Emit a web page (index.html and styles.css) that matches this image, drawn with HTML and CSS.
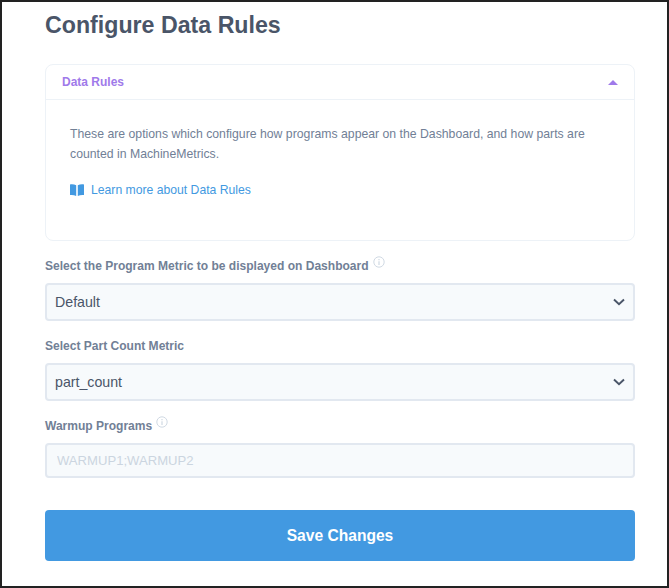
FILE: index.html
```html
<!DOCTYPE html>
<html lang="en">
<head>
    <meta charset="UTF-8">
    <meta name="viewport" content="width=device-width, initial-scale=1.0">
    <title>Configure Data Rules</title>
    <link rel="stylesheet" href="styles.css">
</head>
<body>
    <div class="container">
        <h1 class="page-title">Configure Data Rules</h1>

        <div class="card">
            <div class="card-header">
                <span class="card-title">Data Rules</span>
                <span class="caret-up"></span>
            </div>
            <div class="card-body">
                <p class="card-text">These are options which configure how programs appear on the Dashboard, and how parts are counted in MachineMetrics.</p>
                <a class="learn-link" href="#">
                    <svg class="book-icon" viewBox="0 0 14 12" width="14" height="12">
                        <path d="M0 0.4 C2.2 0 4.4 0.3 6.2 1.2 V12 C4.4 11 2.2 10.7 0 11 Z" fill="#4299e1"/>
                        <path d="M14 0.4 C11.8 0 9.6 0.3 7.8 1.2 V12 C9.6 11 11.8 10.7 14 11 Z" fill="#4299e1"/>
                    </svg>
                    Learn more about Data Rules
                </a>
            </div>
        </div>

        <div class="field">
            <label class="field-label">Select the Program Metric to be displayed on Dashboard
                <svg class="info-icon" viewBox="0 0 12 12" width="12" height="12">
                    <circle cx="6" cy="6" r="5.2" fill="none" stroke="#cbd5e0" stroke-width="0.9"/>
                    <path d="M6 5.2 V9 M6 3 V4.2" stroke="#cbd5e0" stroke-width="1.1"/>
                </svg>
            </label>
            <div class="select-wrap">
                <select class="control">
                    <option>Default</option>
                </select>
                <svg class="chevron" viewBox="0 0 12 8" width="12" height="8">
                    <path d="M1 1.5 L6 6.3 L11 1.5" fill="none" stroke="#4a5568" stroke-width="1.9"/>
                </svg>
            </div>
        </div>

        <div class="field">
            <label class="field-label">Select Part Count Metric</label>
            <div class="select-wrap">
                <select class="control">
                    <option>part_count</option>
                </select>
                <svg class="chevron" viewBox="0 0 12 8" width="12" height="8">
                    <path d="M1 1.5 L6 6.3 L11 1.5" fill="none" stroke="#4a5568" stroke-width="1.9"/>
                </svg>
            </div>
        </div>

        <div class="field">
            <label class="field-label">Warmup Programs
                <svg class="info-icon" viewBox="0 0 12 12" width="12" height="12">
                    <circle cx="6" cy="6" r="5.2" fill="none" stroke="#cbd5e0" stroke-width="0.9"/>
                    <path d="M6 5.2 V9 M6 3 V4.2" stroke="#cbd5e0" stroke-width="1.1"/>
                </svg>
            </label>
            <input class="control-input" type="text" placeholder="WARMUP1;WARMUP2">
        </div>

        <button class="save-btn">Save Changes</button>
    </div>
</body>
</html>
```

FILE: styles.css
```css
* {
    box-sizing: border-box;
}
body {
    margin: 0;
    background: #fff;
    font-family: "Liberation Sans", Arial, sans-serif;
}
.container {
    width: 669px;
    height: 588px;
    border: 2px solid #222;
    padding: 8px 32px 0 43px;
    overflow: hidden;
}
.page-title {
    margin: 0;
    font-size: 23.2px;
    line-height: 30px;
    font-weight: bold;
    color: #4a5568;
}
.card {
    margin-top: 24px;
    height: 177px;
    border: 1px solid #edf2f7;
    border-radius: 8px;
}
.card-header {
    height: 35px;
    padding: 0 16px;
    display: flex;
    align-items: center;
    justify-content: space-between;
    border-bottom: 1px solid #edf2f7;
}
.card-title {
    font-size: 12px;
    font-weight: bold;
    color: #9f7aea;
}
.caret-up {
    width: 0;
    height: 0;
    border-left: 5px solid transparent;
    border-right: 5px solid transparent;
    border-bottom: 5px solid #9f7aea;
}
.card-body {
    padding: 24px 24px 0;
}
.card-text {
    margin: 0;
    font-size: 12.25px;
    line-height: 20px;
    color: #718096;
}
.learn-link {
    margin-top: 16px;
    display: flex;
    align-items: center;
    gap: 7px;
    font-size: 12.2px;
    line-height: 20px;
    color: #4299e1;
    text-decoration: none;
}
.field {
    margin-top: 16px;
}
.field-label {
    display: flex;
    height: 26px;
    padding-top: 1px;
    font-size: 12.04px;
    line-height: 16px;
    font-weight: bold;
    color: #718096;
}
.info-icon {
    margin: -2px 0 0 4px;
}
.select-wrap {
    position: relative;
}
.control {
    display: block;
    width: 100%;
    height: 38px;
    padding: 0 8px;
    appearance: none;
    border: 2px solid #e2e8f0;
    border-radius: 4px;
    background: #f7fafc;
    font-family: inherit;
    font-size: 14.2px;
    color: #4a5568;
}
.control-input {
    display: block;
    width: 100%;
    height: 35px;
    padding: 0 10px;
    border: 2px solid #e2e8f0;
    border-radius: 4px;
    background: #f7fafc;
    font-family: inherit;
    font-size: 13.1px;
    color: #4a5568;
}
.control-input::placeholder {
    color: #cbd5e0;
    opacity: 1;
}
.chevron {
    position: absolute;
    right: 10px;
    top: 15px;
}
.save-btn {
    display: block;
    width: 100%;
    height: 51px;
    margin-top: 32px;
    padding: 1px 0 0;
    border: 0;
    border-radius: 4px;
    background: #4299e1;
    color: #fff;
    font-family: inherit;
    font-size: 15.6px;
    font-weight: bold;
}
```
